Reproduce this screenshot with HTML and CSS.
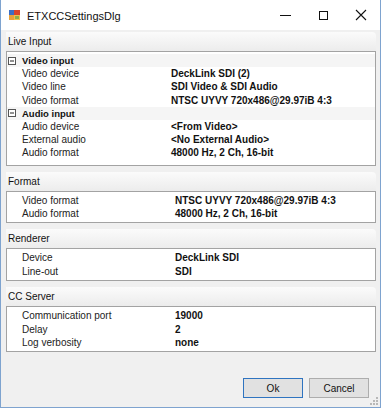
FILE: index.html
```html
<!DOCTYPE html>
<html>
<head>
<meta charset="utf-8">
<title>ETXCCSettingsDlg</title>
<link rel="stylesheet" href="styles.css">
</head>
<body>
<div class="window">
  <div class="titlebar">
    <svg class="app-icon" width="11" height="10" viewBox="0 0 11 10">
      <rect x="0" y="0" width="11" height="10" fill="#f2c14a"/>
      <rect x="0" y="0" width="5" height="5" fill="#3d6fc4"/>
      <rect x="5" y="0" width="6" height="5" fill="#d9452b"/>
      <rect x="0" y="5" width="5" height="5" fill="#e9a23b"/>
      <rect x="6" y="6" width="4" height="3" fill="#8fb04a"/>
    </svg>
    <span class="title">ETXCCSettingsDlg</span>
    <div class="controls">
      <span class="ctl"><svg width="11" height="11" viewBox="0 0 11 11"><line x1="0" y1="5.5" x2="11" y2="5.5" stroke="#111" stroke-width="1"/></svg></span>
      <span class="ctl"><svg width="11" height="11" viewBox="0 0 11 11"><rect x="1.5" y="1.5" width="8" height="8" fill="none" stroke="#111" stroke-width="1"/></svg></span>
      <span class="ctl"><svg width="12" height="12" viewBox="0 0 12 12"><path d="M1 1 L11 11 M11 1 L1 11" stroke="#111" stroke-width="1.1" fill="none"/></svg></span>
    </div>
  </div>
  <div class="client">
    <section class="group group--first">
      <div class="group-head">Live Input</div>
      <div class="grid grid--live grid--tall">
        <div class="row cat"><span class="toggle"><svg width="8" height="8" viewBox="0 0 8 8"><rect x="0.5" y="0.5" width="7" height="7" fill="#fff" stroke="#555"/><line x1="2" y1="4" x2="6" y2="4" stroke="#222"/></svg></span><span class="cat-label">Video input</span></div>
        <div class="row"><span></span><span class="label">Video device</span><span class="value">DeckLink SDI (2)</span></div>
        <div class="row"><span></span><span class="label">Video line</span><span class="value">SDI Video &amp; SDI Audio</span></div>
        <div class="row"><span></span><span class="label">Video format</span><span class="value">NTSC UYVY 720x486@29.97iB 4:3</span></div>
        <div class="row cat"><span class="toggle"><svg width="8" height="8" viewBox="0 0 8 8"><rect x="0.5" y="0.5" width="7" height="7" fill="#fff" stroke="#555"/><line x1="2" y1="4" x2="6" y2="4" stroke="#222"/></svg></span><span class="cat-label">Audio input</span></div>
        <div class="row"><span></span><span class="label">Audio device</span><span class="value">&lt;From Video&gt;</span></div>
        <div class="row"><span></span><span class="label">External audio</span><span class="value">&lt;No External Audio&gt;</span></div>
        <div class="row"><span></span><span class="label">Audio format</span><span class="value">48000 Hz, 2 Ch, 16-bit</span></div>
      </div>
    </section>
    <section class="group">
      <div class="group-head">Format</div>
      <div class="grid">
        <div class="row"><span></span><span class="label">Video format</span><span class="value">NTSC UYVY 720x486@29.97iB 4:3</span></div>
        <div class="row"><span></span><span class="label">Audio format</span><span class="value">48000 Hz, 2 Ch, 16-bit</span></div>
      </div>
    </section>
    <section class="group">
      <div class="group-head">Renderer</div>
      <div class="grid">
        <div class="row"><span></span><span class="label">Device</span><span class="value">DeckLink SDI</span></div>
        <div class="row"><span></span><span class="label">Line-out</span><span class="value">SDI</span></div>
      </div>
    </section>
    <section class="group">
      <div class="group-head">CC Server</div>
      <div class="grid">
        <div class="row"><span></span><span class="label">Communication port</span><span class="value">19000</span></div>
        <div class="row"><span></span><span class="label">Delay</span><span class="value">2</span></div>
        <div class="row"><span></span><span class="label">Log verbosity</span><span class="value">none</span></div>
      </div>
    </section>
    <div class="buttons">
      <button class="btn btn--default">Ok</button>
      <button class="btn">Cancel</button>
    </div>
  </div>
  <svg class="grip" width="8" height="8" viewBox="0 0 8 8">
    <rect x="6" y="0" width="2" height="2" fill="#b8b8b8"/>
    <rect x="3" y="3" width="2" height="2" fill="#b8b8b8"/>
    <rect x="6" y="3" width="2" height="2" fill="#b8b8b8"/>
    <rect x="0" y="6" width="2" height="2" fill="#b8b8b8"/>
    <rect x="3" y="6" width="2" height="2" fill="#b8b8b8"/>
    <rect x="6" y="6" width="2" height="2" fill="#b8b8b8"/>
  </svg>
</div>
</body>
</html>
```
FILE: styles.css
```css
* { box-sizing: border-box; }
html, body { margin: 0; padding: 0; }
body {
  width: 382px;
  height: 408px;
  overflow: hidden;
  background: #fff;
  font-family: "Liberation Sans", Arial, sans-serif;
  color: #111;
}
.window {
  position: relative;
  width: 381px;
  height: 408px;
  border: 1px solid #7ea3cf;
  border-top: 0;
  display: flex;
  flex-direction: column;
  background: #f0f0f0;
}
.titlebar {
  height: 30px;
  flex: none;
  background: #fff;
  display: flex;
  align-items: center;
}
.app-icon { margin-left: 8px; margin-top: -1px; flex: none; }
.title {
  margin-left: 7px;
  font-family: "Liberation Sans Narrow", "Liberation Sans", sans-serif;
  font-size: 11px;
  color: #111;
  margin-top: 1px;
}
.controls { margin-left: auto; display: flex; height: 30px; }
.ctl {
  width: 38px;
  height: 30px;
  display: flex;
  align-items: center;
  justify-content: center;
}
.client {
  flex: 1;
  display: flex;
  flex-direction: column;
  padding: 2px 4px 0 5px;
}
.group { margin-top: 6px; }
.group--first { margin-top: 0; }
.group-head {
  height: 19px;
  line-height: 19px;
  padding-left: 2px;
  font-size: 10px;
  color: #111;
  background: linear-gradient(#fbfbfb, #ececec);
  border-top-right-radius: 4px;
}
.grid {
  --split: 154px;
  border: 1px solid #a3a3a3;
  background: #fff;
  padding: 2px 0 2.5px;
}
.grid--live { --split: 150px; }
.grid--tall { padding-bottom: 5px; }
.row {
  height: 13.2px;
  display: grid;
  grid-template-columns: 14px var(--split) 1fr;
  align-items: center;
  white-space: nowrap;
}
.row.cat { background: #f5f5f5; }
.toggle { display: flex; align-items: center; padding-left: 1px; height: 100%; }
.cat-label {
  grid-column: 2 / 4;
  padding-left: 1px;
  font-weight: bold;
  font-size: 9.5px;
}
.label {
  padding-left: 1px;
  font-family: "Liberation Sans Narrow", "Liberation Sans", sans-serif;
  font-size: 10px;
  color: #222;
}
.value {
  font-weight: bold;
  font-size: 10px;
  color: #111;
}
.buttons {
  margin-top: 26px;
  display: flex;
  justify-content: flex-end;
  gap: 6px;
  padding-right: 7px;
}
.btn {
  width: 60px;
  height: 20px;
  padding: 0;
  border: 1px solid #adadad;
  background: #e1e1e1;
  font-family: "Liberation Sans Narrow", "Liberation Sans", sans-serif;
  font-size: 10px;
  color: #111;
}
.btn--default { border-color: #2f74c0; }
.grip { position: absolute; right: 2px; bottom: 2px; }
```
